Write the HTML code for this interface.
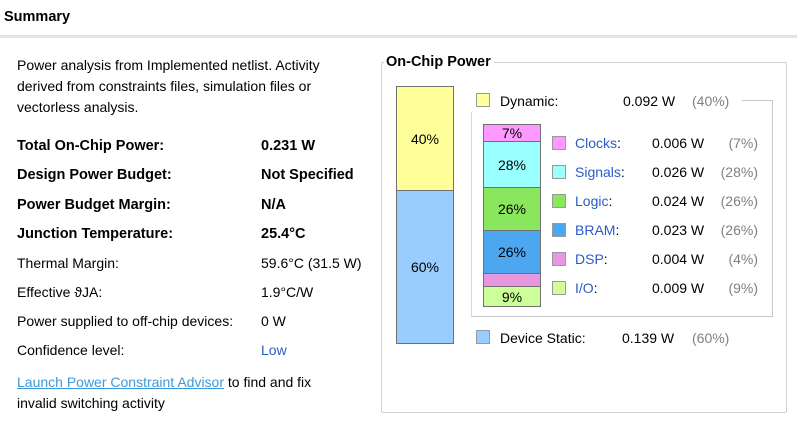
<!DOCTYPE html>
<html><head><style>
body{margin:0;width:797px;height:430px;background:#fff;font-family:"Liberation Sans",sans-serif;font-size:14px;color:#000;position:relative;overflow:hidden}
.a{position:absolute;white-space:nowrap;line-height:16px}
.b{font-weight:bold;font-size:14.5px}
.l{color:#2a5cc8}
.g{color:#808080}
.box{position:absolute;box-sizing:border-box;border:1px solid #707070}
.sq{position:absolute;width:14px;height:14px;box-sizing:border-box;border:1px solid #9a9a9a}
.c{text-align:center;display:flex;align-items:center;justify-content:center}
</style></head><body>
<div class="a b" style="left:4px;top:9px;font-size:14.5px">Summary</div>
<div style="position:absolute;left:0;top:35px;width:797px;height:3px;background:#e3e3e3"></div>

<div class="a" style="left:17px;top:57px">Power analysis from Implemented netlist. Activity</div>
<div class="a" style="left:17px;top:78px">derived from constraints files, simulation files or</div>
<div class="a" style="left:17px;top:99px">vectorless analysis.</div>

<div class="a b" style="left:17px;top:138px">Total On-Chip Power:</div><div class="a b" style="left:261px;top:138px">0.231 W</div>
<div class="a b" style="left:17px;top:167px">Design Power Budget:</div><div class="a b" style="left:261px;top:167px">Not Specified</div>
<div class="a b" style="left:17px;top:197px">Power Budget Margin:</div><div class="a b" style="left:261px;top:197px">N/A</div>
<div class="a b" style="left:17px;top:226px">Junction Temperature:</div><div class="a b" style="left:261px;top:226px">25.4°C</div>
<div class="a" style="left:17px;top:255px">Thermal Margin:</div><div class="a" style="left:261px;top:255px">59.6°C (31.5 W)</div>
<div class="a" style="left:17px;top:284px">Effective ϑJA:</div><div class="a" style="left:261px;top:284px">1.9°C/W</div>
<div class="a" style="left:17px;top:313px">Power supplied to off-chip devices:</div><div class="a" style="left:261px;top:313px">0 W</div>
<div class="a" style="left:17px;top:342px">Confidence level:</div><div class="a l" style="left:261px;top:342px">Low</div>
<div class="a" style="left:17px;top:374px"><span style="color:#3d9ad8;text-decoration:underline">Launch Power Constraint Advisor</span> to find and fix</div>
<div class="a" style="left:17px;top:395px">invalid switching activity</div>

<div style="position:absolute;left:381px;top:62px;width:406px;height:351px;box-sizing:border-box;border:1px solid #d0d0d0;border-radius:2px"></div>
<div class="a b" style="left:384px;top:54px;background:#fff;padding:0 3px 0 2px">On-Chip Power</div>

<div class="box c" style="left:396px;top:86px;width:58px;height:105px;background:#ffff99">40%</div>
<div class="box c" style="left:396px;top:190px;width:58px;height:154px;background:#99ccff">60%</div>

<div style="position:absolute;left:471px;top:100px;width:302px;height:217px;box-sizing:border-box;border:1px solid #c8c8c8;border-left-color:#d8d8d8"></div>
<div style="position:absolute;left:466px;top:90px;width:276px;height:22px;background:#fff"></div>

<div class="sq" style="left:476px;top:93px;background:#ffff99"></div>
<div class="a" style="left:500px;top:93px">Dynamic:</div>
<div class="a" style="left:623px;top:93px">0.092 W</div>
<div class="a g" style="left:692px;top:93px">(40%)</div>

<div class="box c" style="left:483px;top:124px;width:58px;height:18px;background:#ff99ff">7%</div>
<div class="box c" style="left:483px;top:141px;width:58px;height:47px;background:#99ffff">28%</div>
<div class="box c" style="left:483px;top:187px;width:58px;height:44px;background:#8ae65c">26%</div>
<div class="box c" style="left:483px;top:230px;width:58px;height:44px;background:#4da6f0">26%</div>
<div class="box" style="left:483px;top:273px;width:58px;height:14px;background:#e699dd"></div>
<div class="box c" style="left:483px;top:286px;width:58px;height:21px;background:#ccff99">9%</div>

<div class="sq" style="left:552px;top:136px;background:#ff99ff"></div>
<div class="a" style="left:575px;top:135px"><span class="l">Clocks</span>:</div><div class="a" style="left:652px;top:135px">0.006 W</div><div class="a g" style="left:720px;top:135px;width:38px;text-align:right">(7%)</div>
<div class="sq" style="left:552px;top:165px;background:#99ffff"></div>
<div class="a" style="left:575px;top:164px"><span class="l">Signals</span>:</div><div class="a" style="left:652px;top:164px">0.026 W</div><div class="a g" style="left:710px;top:164px;width:48px;text-align:right">(28%)</div>
<div class="sq" style="left:552px;top:194px;background:#8ae65c"></div>
<div class="a" style="left:575px;top:193px"><span class="l">Logic</span>:</div><div class="a" style="left:652px;top:193px">0.024 W</div><div class="a g" style="left:710px;top:193px;width:48px;text-align:right">(26%)</div>
<div class="sq" style="left:552px;top:223px;background:#4da6f0"></div>
<div class="a" style="left:575px;top:222px"><span class="l">BRAM</span>:</div><div class="a" style="left:652px;top:222px">0.023 W</div><div class="a g" style="left:710px;top:222px;width:48px;text-align:right">(26%)</div>
<div class="sq" style="left:552px;top:252px;background:#e699dd"></div>
<div class="a" style="left:575px;top:251px"><span class="l">DSP</span>:</div><div class="a" style="left:652px;top:251px">0.004 W</div><div class="a g" style="left:720px;top:251px;width:38px;text-align:right">(4%)</div>
<div class="sq" style="left:552px;top:281px;background:#ccff99"></div>
<div class="a" style="left:575px;top:280px"><span class="l">I/O</span>:</div><div class="a" style="left:652px;top:280px">0.009 W</div><div class="a g" style="left:720px;top:280px;width:38px;text-align:right">(9%)</div>

<div class="sq" style="left:476px;top:330px;background:#99ccff"></div>
<div class="a" style="left:500px;top:330px">Device Static:</div>
<div class="a" style="left:622px;top:330px">0.139 W</div>
<div class="a g" style="left:692px;top:330px">(60%)</div>
</body></html>
